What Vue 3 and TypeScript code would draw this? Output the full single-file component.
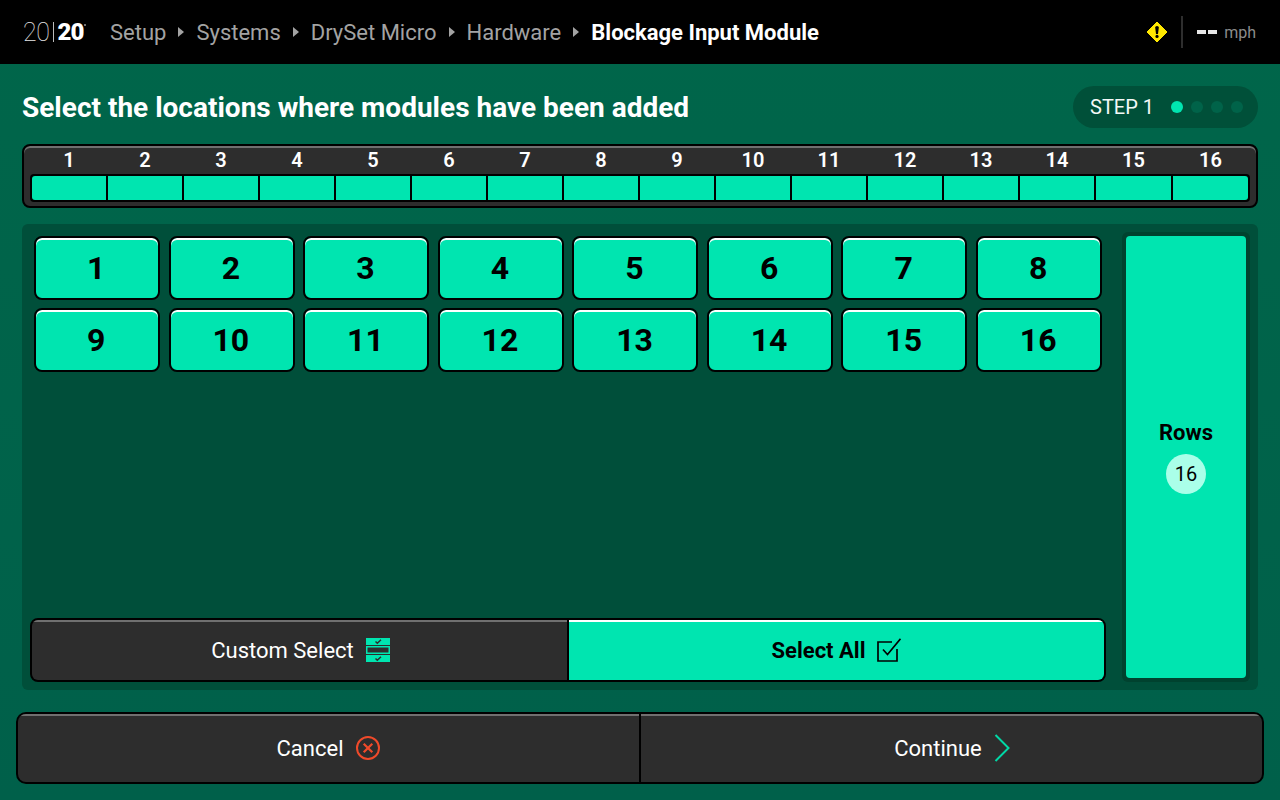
<script setup lang="ts">
const crumbs = ['Setup', 'Systems', 'DrySet Micro', 'Hardware']
const current = 'Blockage Input Module'
const rows = Array.from({ length: 16 }, (_, i) => i + 1)
const dots = [true, false, false, false]
</script>

<template>
  <div class="screen">
    <header class="topbar">
      <div class="logo">
        <span class="logo-thin">20</span>
        <i class="logo-bar"></i>
        <span class="logo-bold">20</span>
        <i class="logo-dot"></i>
      </div>
      <nav class="crumbs">
        <template v-for="crumb in crumbs" :key="crumb">
          <span class="crumb">{{ crumb }}</span>
          <i class="crumb-arrow"></i>
        </template>
        <span class="crumb current">{{ current }}</span>
      </nav>
      <div class="status">
        <svg class="warn" width="22" height="22" viewBox="0 0 22 22">
          <path d="M11 1 L21 11 L11 21 L1 11 Z" fill="#ffe800" stroke="#ffe800" stroke-width="1" stroke-linejoin="round" />
          <path d="M9.2 6.6 Q9.2 5 11 5 Q12.8 5 12.8 6.6 L12 13 H10 Z" fill="#000" />
          <circle cx="11" cy="15.4" r="1.6" fill="#000" />
        </svg>
        <i class="status-sep"></i>
        <div class="speed">
          <i class="dash"></i><i class="dash"></i>
          <span class="unit">mph</span>
        </div>
      </div>
    </header>

    <main class="content">
      <div class="title-row">
        <h1>Select the locations where modules have been added</h1>
        <div class="step">
          <span>STEP 1</span>
          <div class="dots">
            <i v-for="(on, i) in dots" :key="i" class="dot" :class="{ on }"></i>
          </div>
        </div>
      </div>

      <section class="strip">
        <div class="strip-nums">
          <span v-for="row in rows" :key="row">{{ row }}</span>
        </div>
        <div class="strip-cells">
          <i v-for="row in rows" :key="row"></i>
        </div>
      </section>

      <section class="panel">
        <div class="panel-left">
          <div class="grid">
            <button v-for="row in rows" :key="row" class="row-btn" type="button">{{ row }}</button>
          </div>
          <div class="segment">
            <button class="seg-btn" type="button">
              Custom Select
              <svg width="24" height="24" viewBox="0 0 24 24">
                <rect x="0" y="0" width="24" height="7" fill="#00e5b0" />
                <rect x="0.75" y="8.75" width="22.5" height="6.5" fill="none" stroke="#00e5b0" stroke-width="1.5" />
                <rect x="0" y="17" width="24" height="7" fill="#00e5b0" />
                <path d="M9.5 3.5 L11.3 5.2 L15 1.8" fill="none" stroke="#2d2d2d" stroke-width="1.5" />
                <path d="M9.5 20.5 L11.3 22.2 L15 18.8" fill="none" stroke="#2d2d2d" stroke-width="1.5" />
              </svg>
            </button>
            <button class="seg-btn active" type="button">
              Select All
              <svg width="24" height="24" viewBox="0 0 24 24">
                <path d="M20 11 V23 H1 V4 H15" fill="none" stroke="#000" stroke-width="1.7" />
                <path d="M6 11.5 L10.5 16.5 L23.5 0.8" fill="none" stroke="#000" stroke-width="1.7" />
              </svg>
            </button>
          </div>
        </div>
        <div class="rows-wrap">
          <div class="rows-card">
            <strong>Rows</strong>
            <span class="rows-count">16</span>
          </div>
        </div>
      </section>
    </main>

    <footer class="actions">
      <button class="act-btn" type="button">
        Cancel
        <svg width="26" height="26" viewBox="0 0 26 26">
          <circle cx="13" cy="13" r="11" fill="none" stroke="#f04a2a" stroke-width="2" />
          <path d="M8.7 8.7 L17.3 17.3 M17.3 8.7 L8.7 17.3" fill="none" stroke="#f04a2a" stroke-width="2.2" />
        </svg>
      </button>
      <button class="act-btn" type="button">
        Continue
        <svg width="16" height="28" viewBox="0 0 16 28">
          <path d="M1.5 1 L14.5 14 L1.5 27" fill="none" stroke="#00d8a6" stroke-width="2" />
        </svg>
      </button>
    </footer>
  </div>
</template>

<style>
html,
body {
  margin: 0;
  background: #00624a;
}
</style>

<style scoped>
.screen {
  width: 1280px;
  height: 800px;
  display: flex;
  flex-direction: column;
  overflow: hidden;
  font-family: Roboto, 'Liberation Sans', sans-serif;
  color: #fff;
  background: linear-gradient(180deg, #00664a 0%, #00604a 100%);
}

.topbar {
  height: 64px;
  flex: none;
  background: #000;
  display: flex;
  align-items: center;
  padding: 0 24px 0 23px;
}

.logo {
  width: 87px;
  display: flex;
  align-items: center;
  font-size: 25px;
  line-height: 1;
  letter-spacing: -0.4px;
  position: relative;
}

.logo-thin {
  font-weight: 100;
  color: #e8e8e8;
}

.logo-bold {
  font-size: 24px;
  font-weight: 900;
  letter-spacing: -0.9px;
}

.logo-bar {
  width: 1px;
  height: 20px;
  margin: 0 4px 0 3px;
  background: #bbb;
}

.logo-dot {
  position: absolute;
  left: 61px;
  top: 4px;
  width: 2px;
  height: 2px;
  border-radius: 50%;
  background: #999;
}

.crumbs {
  display: flex;
  align-items: center;
  font-size: 22px;
  color: #a3a3a3;
}

.crumb.current {
  color: #fff;
  font-weight: 700;
}

.crumb-arrow {
  width: 0;
  height: 0;
  margin: 0 12px;
  border-left: 6px solid #a3a3a3;
  border-top: 5.5px solid transparent;
  border-bottom: 5.5px solid transparent;
}

.status {
  margin-left: auto;
  display: flex;
  align-items: center;
}

.status-sep {
  width: 2px;
  height: 32px;
  margin: 0 14px 0 13px;
  background: #2e2e2e;
}

.speed {
  display: flex;
  align-items: center;
}

.dash {
  width: 9px;
  height: 3.5px;
  margin-right: 2.5px;
  background: #e6e6e6;
}

.unit {
  margin-left: 4.5px;
  font-size: 16px;
  color: #8c8c8c;
}

.content {
  flex: none;
  padding: 0 22px;
}

.title-row {
  height: 80px;
  display: flex;
  align-items: center;
  justify-content: space-between;
  padding-top: 6px;
  box-sizing: border-box;
}

h1 {
  margin: 1px 0 0;
  font-size: 28px;
  font-weight: 700;
  line-height: 32px;
}

.step {
  width: 185px;
  height: 42px;
  box-sizing: border-box;
  padding: 0 15px 0 17px;
  display: flex;
  align-items: center;
  justify-content: space-between;
  border-radius: 21px;
  background: #005039;
  font-size: 20px;
  color: #f4f9f7;
}

.step span {
  margin-top: -1px;
}

.dots {
  display: flex;
  gap: 8px;
}

.dot {
  width: 12px;
  height: 12px;
  border-radius: 50%;
  background: #006349;
}

.dot.on {
  background: #00e5b0;
}

.strip {
  height: 64px;
  box-sizing: border-box;
  border: 2px solid #000;
  border-radius: 8px;
  background: #2d2d2d;
  box-shadow: inset 0 2px 0 #707070;
  padding: 0 6px;
  display: flex;
  flex-direction: column;
}

.strip-nums,
.strip-cells {
  display: grid;
  grid-template-columns: repeat(14, 74px) 75px 1fr;
  gap: 2px;
  box-sizing: border-box;
  padding: 0 2px;
}

.strip-nums {
  height: 28px;
  flex: none;
  align-items: center;
  font-size: 20px;
  font-weight: 600;
  line-height: 22px;
  text-align: center;
}

.strip-cells {
  height: 28px;
  padding: 2px;
  background: #000;
  border-radius: 4px;
}

.strip-cells i {
  background: #00e5b0;
}

.strip-cells i:first-child {
  border-radius: 3px 0 0 3px;
}

.strip-cells i:last-child {
  border-radius: 0 3px 3px 0;
}

.panel {
  height: 466px;
  margin-top: 16px;
  box-sizing: border-box;
  padding: 8px;
  display: flex;
  gap: 16px;
  border-radius: 6px;
  background: #004f3a;
}

.panel-left {
  flex: 1;
  display: flex;
  flex-direction: column;
  justify-content: space-between;
}

.grid {
  padding: 4px;
  display: grid;
  grid-template-columns: repeat(8, 126px);
  grid-auto-rows: 64px;
  justify-content: space-between;
  row-gap: 8px;
}

button {
  font-family: inherit;
  padding: 0;
  cursor: pointer;
}

.row-btn {
  border: 2px solid #000;
  border-radius: 8px;
  padding-right: 1.5px;
  background: #00e5b0;
  box-shadow: inset 0 2px 0 #fff;
  font-size: 32px;
  font-weight: 700;
  color: #000;
}

.segment,
.actions {
  display: grid;
  grid-template-columns: 1fr 1fr;
  gap: 2px;
  box-sizing: border-box;
  border: 2px solid #000;
  overflow: hidden;
  background: #000;
}

.segment {
  height: 64px;
  border-radius: 8px;
}

.seg-btn,
.act-btn {
  border: 0;
  display: flex;
  align-items: center;
  justify-content: center;
  gap: 12px;
  font-size: 22px;
  font-weight: 450;
  color: #fff;
  background: #2d2d2d;
  box-shadow: inset 0 2px 0 #707070;
}

.seg-btn:first-child {
  padding-left: 2px;
}

.act-btn {
  padding-left: 1px;
}

.seg-btn.active {
  padding-left: 0;
  font-weight: 700;
  color: #000;
  background: #00e5b0;
  box-shadow: inset 0 2px 0 #fff;
}

.rows-wrap {
  width: 128px;
  flex: none;
  box-sizing: border-box;
  padding: 4px;
  border-radius: 6px;
  background: #00422f;
}

.rows-card {
  height: 100%;
  display: flex;
  flex-direction: column;
  align-items: center;
  justify-content: center;
  gap: 8px;
  border-radius: 4px;
  background: #00e5b0;
  color: #000;
}

.rows-card strong {
  font-size: 22px;
  font-weight: 700;
  line-height: 26px;
}

.rows-count {
  width: 40px;
  height: 40px;
  display: flex;
  align-items: center;
  justify-content: center;
  border-radius: 50%;
  background: #aaffe9;
  font-size: 20px;
}

.actions {
  flex: none;
  height: 72px;
  margin: 22px 16px 0;
  border-radius: 10px;
}
</style>
